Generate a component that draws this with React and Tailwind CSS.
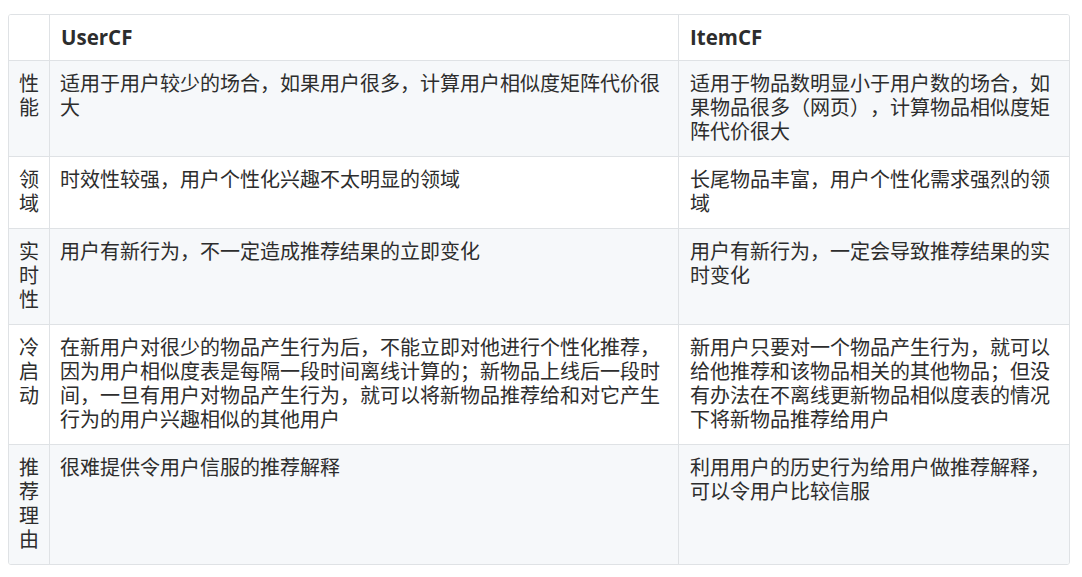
export default function App() {
  const rows = [
    {
      k: "性能",
      a: "适用于用户较少的场合，如果用户很多，计算用户相似度矩阵代价很大",
      b: "适用于物品数明显小于用户数的场合，如果物品很多（网页），计算物品相似度矩阵代价很大",
    },
    {
      k: "领域",
      a: "时效性较强，用户个性化兴趣不太明显的领域",
      b: "长尾物品丰富，用户个性化需求强烈的领域",
    },
    {
      k: "实时性",
      a: "用户有新行为，不一定造成推荐结果的立即变化",
      b: "用户有新行为，一定会导致推荐结果的实时变化",
    },
    {
      k: "冷启动",
      a: "在新用户对很少的物品产生行为后，不能立即对他进行个性化推荐，因为用户相似度表是每隔一段时间离线计算的；新物品上线后一段时间，一旦有用户对物品产生行为，就可以将新物品推荐给和对它产生行为的用户兴趣相似的其他用户",
      b: "新用户只要对一个物品产生行为，就可以给他推荐和该物品相关的其他物品；但没有办法在不离线更新物品相似度表的情况下将新物品推荐给用户",
    },
    {
      k: "推荐理由",
      a: "很难提供令用户信服的推荐解释",
      b: "利用用户的历史行为给用户做推荐解释，可以令用户比较信服",
    },
  ];
  const font = {
    fontFamily: '"Open Sans", "Noto Sans CJK SC", sans-serif',
  };
  return (
    <div className="bg-white w-[1082px] h-[577px] pt-[14px] pl-[8px]" style={font}>
      <div className="w-[1062px] border border-[#dfe2e5] rounded-[3px] overflow-hidden text-[20px] leading-[24px] text-[#2d2d2d] [text-spacing-trim:space-all]">
        <div className="grid grid-cols-[40px_629px_391px] bg-white">
          <div className="px-[10px] pt-[10px] pb-[11px]"></div>
          <div className="border-l border-[#dfe2e5] px-[11px] pt-[10px] pb-[11px] font-bold text-[20.5px]">UserCF</div>
          <div className="border-l border-[#dfe2e5] px-[11px] pt-[10px] pb-[11px] font-bold text-[20.5px]">ItemCF</div>
        </div>
        {rows.map((r, i) => (
          <div
            key={i}
            className={
              "grid grid-cols-[40px_629px_391px] border-t border-[#dfe2e5] " +
              (i % 2 === 0 ? "bg-[#f6f8fa]" : "bg-white")
            }
          >
            <div className="px-[10px] pt-[11px] pb-[12px] break-all">{r.k}</div>
            <div className="border-l border-[#dfe2e5] px-[10px] pt-[11px] pb-[12px]">{r.a}</div>
            <div className="border-l border-[#dfe2e5] pl-[11px] pr-[9px] pt-[11px] pb-[12px]">{r.b}</div>
          </div>
        ))}
      </div>
    </div>
  );
}
